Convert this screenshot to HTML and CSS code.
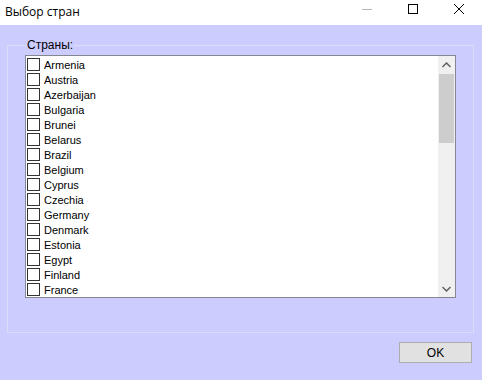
FILE: index.html
```html
<!DOCTYPE html>
<html lang="ru">
<head>
    <meta charset="UTF-8">
    <meta name="viewport" content="width=device-width, initial-scale=1.0">
    <title>Выбор стран</title>
    <link rel="stylesheet" href="styles.css">
</head>
<body>

    <div class="titlebar">
        <span class="title">Выбор стран</span>
        <div class="controls">
            <div class="ctl">
                <svg width="10" height="10" viewBox="0 0 10 10"><path d="M0 5.5H10" stroke="#b5b5b5" stroke-width="1"/></svg>
            </div>
            <div class="ctl">
                <svg width="10" height="10" viewBox="0 0 10 10"><rect x="0.5" y="0.5" width="9" height="9" fill="none" stroke="#000" stroke-width="1"/></svg>
            </div>
            <div class="ctl">
                <svg width="10" height="10" viewBox="0 0 10 10"><path d="M0 0L10 10M10 0L0 10" stroke="#000" stroke-width="1"/></svg>
            </div>
        </div>
    </div>

    <div class="main">
        <fieldset class="group">
            <legend>Страны:</legend>

            <div class="listbox">
                <div class="items">
                    <div class="item"><span class="check"></span>Armenia</div>
                    <div class="item"><span class="check"></span>Austria</div>
                    <div class="item"><span class="check"></span>Azerbaijan</div>
                    <div class="item"><span class="check"></span>Bulgaria</div>
                    <div class="item"><span class="check"></span>Brunei</div>
                    <div class="item"><span class="check"></span>Belarus</div>
                    <div class="item"><span class="check"></span>Brazil</div>
                    <div class="item"><span class="check"></span>Belgium</div>
                    <div class="item"><span class="check"></span>Cyprus</div>
                    <div class="item"><span class="check"></span>Czechia</div>
                    <div class="item"><span class="check"></span>Germany</div>
                    <div class="item"><span class="check"></span>Denmark</div>
                    <div class="item"><span class="check"></span>Estonia</div>
                    <div class="item"><span class="check"></span>Egypt</div>
                    <div class="item"><span class="check"></span>Finland</div>
                    <div class="item"><span class="check"></span>France</div>
                </div>
                <div class="scrollbar">
                    <div class="arrow">
                        <svg width="9" height="6" viewBox="0 0 9 6"><path d="M0.5 5L4.5 1L8.5 5" fill="none" stroke="#606060" stroke-width="1.5"/></svg>
                    </div>
                    <div class="track">
                        <div class="thumb"></div>
                    </div>
                    <div class="arrow">
                        <svg width="9" height="6" viewBox="0 0 9 6"><path d="M0.5 1L4.5 5L8.5 1" fill="none" stroke="#606060" stroke-width="1.5"/></svg>
                    </div>
                </div>
            </div>
        </fieldset>

        <div class="buttons">
            <button class="btn">OK</button>
        </div>
    </div>

</body>
</html>
```

FILE: styles.css
```css
body{
    margin: 0;
    width: 482px;
    height: 380px;
    overflow: hidden;
    font-family: "Liberation Sans", Arial, sans-serif;
    font-size: 11px;
    color: #000;
}

.titlebar{
    height: 25px;
    background-color: #fff;
    display: flex;
    align-items: center;
    justify-content: space-between;
}

.title{
    font-family: "Open Sans", "Noto Sans", sans-serif;
    font-size: 12px;
    padding-left: 5px;
    padding-bottom: 3px;
}

.controls{
    display: flex;
    height: 25px;
}

.ctl{
    width: 46px;
    display: flex;
    align-items: center;
    justify-content: center;
    padding-bottom: 8px;
}

.main{
    height: 355px;
    background-color: #ccccff;
    padding: 13px 8px 0 7px;
    box-sizing: border-box;
}

.group{
    margin: 0;
    width: 467px;
    height: 295px;
    box-sizing: border-box;
    border: 1px solid #dddcf6;
    padding: 3px 0 0 17px;
}

.group legend{
    font-size: 12px;
    padding: 0 1px;
    margin-left: 1px;
    line-height: 14px;
}

.listbox{
    width: 431px;
    height: 243px;
    box-sizing: border-box;
    border: 1px solid #828790;
    background-color: #fff;
    display: flex;
}

.items{
    flex: 1;
    padding-top: 1px;
}

.item{
    height: 15px;
    display: flex;
    align-items: center;
    padding-left: 1px;
}

.check{
    width: 11px;
    height: 11px;
    border: 1px solid #333;
    background-color: #fff;
    margin-right: 4px;
}

.scrollbar{
    width: 17px;
    background-color: #f0f0f0;
    display: flex;
    flex-direction: column;
}

.arrow{
    height: 17px;
    display: flex;
    align-items: center;
    justify-content: center;
}

.track{
    flex: 1;
}

.thumb{
    height: 69px;
    margin: 1px 1px 0 1px;
    background-color: #cdcdcd;
}

.buttons{
    display: flex;
    justify-content: flex-end;
    padding-top: 9px;
    padding-right: 2px;
}

.btn{
    width: 73px;
    height: 21px;
    font-family: "Liberation Sans", Arial, sans-serif;
    font-size: 12px;
    background-color: #e1e1e1;
    border: 1px solid #adadad;
    border-radius: 0;
    padding: 0;
    color: #000;
}
```
